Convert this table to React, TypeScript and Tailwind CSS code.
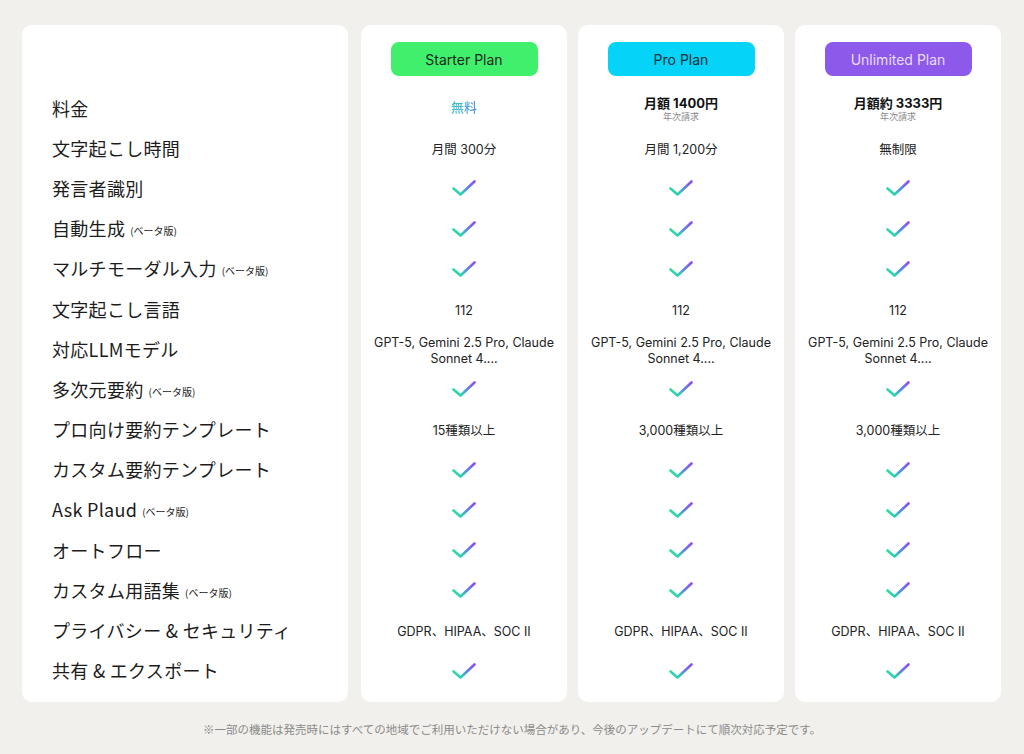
import React from "react";

type Cell =
  | { t: "check" }
  | { t: "text"; v: string }
  | { t: "price"; v: string; sub?: string; free?: boolean };

const labels: { main: string; beta?: boolean }[] = [
  { main: "料金" },
  { main: "文字起こし時間" },
  { main: "発言者識別" },
  { main: "自動生成", beta: true },
  { main: "マルチモーダル入力", beta: true },
  { main: "文字起こし言語" },
  { main: "対応LLMモデル" },
  { main: "多次元要約", beta: true },
  { main: "プロ向け要約テンプレート" },
  { main: "カスタム要約テンプレート" },
  { main: "Ask Plaud", beta: true },
  { main: "オートフロー" },
  { main: "カスタム用語集", beta: true },
  { main: "プライバシー & セキュリティ" },
  { main: "共有 & エクスポート" },
];

const C: Cell = { t: "check" };
const llm = "GPT-5, Gemini 2.5 Pro, Claude Sonnet 4....";

const plans: { name: string; btn: string; cells: Cell[] }[] = [
  {
    name: "Starter Plan",
    btn: "bg-[#40f06c] text-[#1d2a22]",
    cells: [
      { t: "price", v: "無料", free: true },
      { t: "text", v: "月間 300分" },
      C, C, C,
      { t: "text", v: "112" },
      { t: "text", v: llm },
      C,
      { t: "text", v: "15種類以上" },
      C, C, C, C,
      { t: "text", v: "GDPR、HIPAA、SOC II" },
      C,
    ],
  },
  {
    name: "Pro Plan",
    btn: "bg-[#05d3f7] text-[#13303a]",
    cells: [
      { t: "price", v: "月額 1400円", sub: "年次請求" },
      { t: "text", v: "月間 1,200分" },
      C, C, C,
      { t: "text", v: "112" },
      { t: "text", v: llm },
      C,
      { t: "text", v: "3,000種類以上" },
      C, C, C, C,
      { t: "text", v: "GDPR、HIPAA、SOC II" },
      C,
    ],
  },
  {
    name: "Unlimited Plan",
    btn: "bg-[#8d59ea] text-[#e8defb]",
    cells: [
      { t: "price", v: "月額約 3333円", sub: "年次請求" },
      { t: "text", v: "無制限" },
      C, C, C,
      { t: "text", v: "112" },
      { t: "text", v: llm },
      C,
      { t: "text", v: "3,000種類以上" },
      C, C, C, C,
      { t: "text", v: "GDPR、HIPAA、SOC II" },
      C,
    ],
  },
];

let gid = 0;
function Check() {
  const id = React.useMemo(() => `g${gid++}`, []);
  return (
    <svg width="26" height="18" viewBox="0 0 26 18" fill="none">
      <defs>
        <linearGradient id={id} x1="3" y1="15" x2="23" y2="3" gradientUnits="userSpaceOnUse">
          <stop offset="0" stopColor="#2be0a0" />
          <stop offset="0.35" stopColor="#30c9b8" />
          <stop offset="0.6" stopColor="#5b86e8" />
          <stop offset="1" stopColor="#8a50f4" />
        </linearGradient>
      </defs>
      <path
        d="M2.5 9.5 L9.5 15.5 L23.5 2.5"
        stroke={`url(#${id})`}
        strokeWidth="2.6"
        strokeLinecap="round"
        strokeLinejoin="round"
      />
    </svg>
  );
}

const font = { fontFamily: "Inter, 'Noto Sans CJK JP', sans-serif" };

function CellView({ c }: { c: Cell }) {
  if (c.t === "check") return <Check />;
  if (c.t === "text")
    return (
      <div className="text-[12.5px] leading-[16px] text-[#222] text-center px-[10px] mt-[3px]">
        {c.v}
      </div>
    );
  if (c.free)
    return (
      <div className="text-[13px] font-medium bg-gradient-to-r from-[#3cc7c0] to-[#5a8fe8] bg-clip-text text-transparent">
        {c.v}
      </div>
    );
  return (
    <div className="flex flex-col items-center">
      <div className="text-[13px] font-bold leading-[16px] text-[#111]">{c.v}</div>
      <div className="text-[9px] leading-[11px] text-[#888]">{c.sub}</div>
    </div>
  );
}

export default function App() {
  return (
    <div
      className="w-[1024px] h-[754px] bg-[#f2f0ec] flex flex-col"
      style={font}
    >
      <div className="flex pt-[25px] px-[22px]">
        <div className="w-[326px] h-[677px] bg-white rounded-[10px] pt-[63px]">
          {labels.map((l, i) => (
            <div key={i} className="h-[40.2px] flex items-center pl-[30px] text-[#1c1c1c]">
              <span
                className="text-[18px] tracking-[0.3px]"
                style={{ fontFamily: "'Noto Sans CJK JP', Inter, sans-serif" }}
              >
                {l.main}
              </span>
              {l.beta && (
                <span
                  className="text-[10px] ml-[5px] mt-[4px]"
                  style={{ fontFamily: "'Noto Sans CJK JP', sans-serif" }}
                >
                  (ベータ版)
                </span>
              )}
            </div>
          ))}
        </div>
        <div className="flex gap-[11px] ml-[13px]">
          {plans.map((p) => (
            <div key={p.name} className="w-[206px] h-[677px] bg-white rounded-[10px] pt-[17px] flex flex-col items-center">
              <div
                className={`w-[147px] h-[34px] rounded-[8px] flex items-center justify-center text-[14px] ${p.btn}`}
              >
                {p.name}
              </div>
              <div className="mt-[12px] w-full">
                {p.cells.map((c, i) => (
                  <div key={i} className="h-[40.2px] flex items-center justify-center">
                    <CellView c={c} />
                  </div>
                ))}
              </div>
            </div>
          ))}
        </div>
      </div>
      <div
        className="text-center text-[11.5px] text-[#8a8a8a] mt-[19px]"
        style={{ fontFamily: "'Noto Sans CJK JP', sans-serif" }}
      >
        ※一部の機能は発売時にはすべての地域でご利用いただけない場合があり、今後のアップデートにて順次対応予定です。
      </div>
    </div>
  );
}
